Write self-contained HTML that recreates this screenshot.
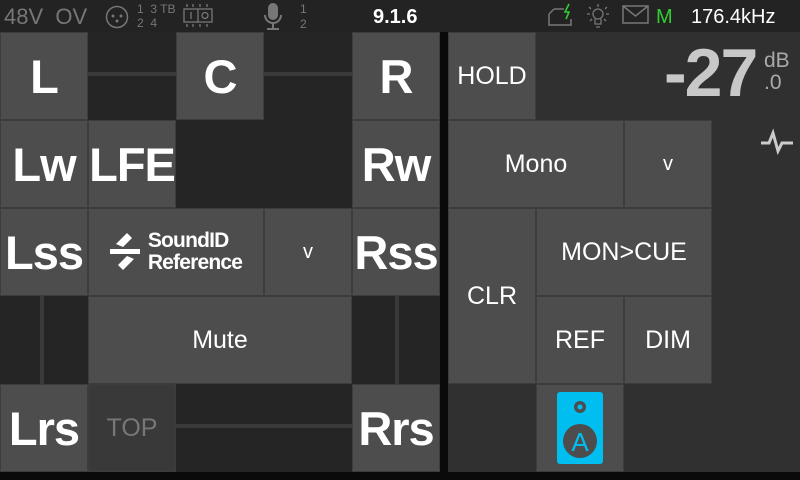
<!DOCTYPE html><html><head><style>
*{margin:0;padding:0;box-sizing:border-box}
body{width:800px;height:480px;background:#0a0a0a;font-family:"Liberation Sans",sans-serif;position:relative;overflow:hidden}
.a{position:absolute}
#top{left:0;top:0;width:800px;height:32px;background:#232323;color:#777}
#lp{left:0;top:32px;width:440px;height:440px;background:#252525}
#rp{left:448px;top:32px;width:352px;height:440px;background:#303030}
.c{position:absolute;background:#4d4d4d;border:1px solid #3c3c3c;color:#fff;display:flex;align-items:center;justify-content:center}
.big{font-weight:bold;font-size:47px;letter-spacing:-1px}
.m{font-size:25px}
.ln{position:absolute;background:#3a3a3a}
</style></head><body>
<div id="top" class="a">
<div class="a" style="left:4px;top:4px;font-size:22px">48V&nbsp; OV</div>
<svg class="a" style="left:105px;top:5px" width="24" height="24"><circle cx="12" cy="12" r="10.5" fill="none" stroke="#777" stroke-width="1.5"/><circle cx="8" cy="11" r="1.5" fill="#777"/><circle cx="16" cy="11" r="1.5" fill="#777"/><circle cx="12" cy="16" r="1.5" fill="#777"/></svg>
<div class="a" style="left:137px;top:2px;font-size:12px;line-height:14px">1 &nbsp;3 TB<br>2 &nbsp;4</div>
<svg class="a" style="left:183px;top:3px" width="30" height="26" stroke="#777" fill="none" stroke-width="1.3"><rect x="1" y="6" width="28" height="13"/><line x1="15" y1="6" x2="15" y2="19"/><line x1="8" y1="9" x2="8" y2="16"/><circle cx="22" cy="12.5" r="3"/><path d="M4 1v3M10 1v3M17 1v3M24 1v3M4 21v3M10 21v3M17 21v3M24 21v3"/></svg>
<svg class="a" style="left:262px;top:3px" width="22" height="28" fill="#777"><rect x="6" y="0" width="10" height="17" rx="5"/><path d="M3 12a8 8 0 0 0 16 0" stroke="#777" stroke-width="2" fill="none"/><rect x="10" y="20" width="2" height="5"/><rect x="5" y="25" width="12" height="2"/></svg>
<div class="a" style="left:300px;top:2px;font-size:12px;line-height:15px">1<br>2</div>
<div class="a" style="left:373px;top:6px;font-size:20px;font-weight:bold;color:#fff">9.1.6</div>
<svg class="a" style="left:548px;top:3px" width="26" height="24" fill="none"><path d="M6 6h10M1 11l5-5M1 11v11h22v-6" stroke="#777" stroke-width="1.5"/><path d="M21 1l-4 8h4l-3 7" stroke="#3c3" stroke-width="1.6"/></svg>
<svg class="a" style="left:585px;top:2px" width="26" height="28" stroke="#777" fill="none" stroke-width="1.3"><circle cx="13" cy="12" r="5"/><path d="M10 17v5h6v-5M11 25h4M13 2v3M4 5l2 2M22 5l-2 2M2 12h3M21 12h3M5 19l2-2M21 19l-2-2"/></svg>
<svg class="a" style="left:622px;top:5px" width="28" height="20" stroke="#777" fill="none" stroke-width="1.5"><rect x="1" y="1" width="25" height="17"/><path d="M1 1l12.5 10L26 1"/></svg>
<div class="a" style="left:656px;top:6px;font-size:20px;color:#3c3">M</div>
<div class="a" style="left:691px;top:6px;font-size:20px;color:#fff">176.4kHz</div>
</div>
<div id="lp" class="a">
<div class="ln" style="left:88px;top:40px;width:88px;height:4px"></div>
<div class="ln" style="left:264px;top:40px;width:88px;height:4px"></div>
<div class="ln" style="left:40px;top:264px;width:4px;height:88px"></div>
<div class="ln" style="left:395px;top:264px;width:4px;height:88px"></div>
<div class="ln" style="left:176px;top:392px;width:176px;height:4px"></div>
<div class="c big" style="left:0;top:0;width:88px;height:88px">L</div>
<div class="c big" style="left:176px;top:0;width:88px;height:88px">C</div>
<div class="c big" style="left:352px;top:0;width:88px;height:88px">R</div>
<div class="c big" style="left:0;top:88px;width:88px;height:88px">Lw</div>
<div class="c big" style="left:88px;top:88px;width:88px;height:88px">LFE</div>
<div class="c big" style="left:352px;top:88px;width:88px;height:88px">Rw</div>
<div class="c big" style="left:0;top:176px;width:88px;height:88px">Lss</div>
<div class="c" style="left:88px;top:176px;width:176px;height:88px"><svg width="30" height="44" fill="#fff" style="margin-right:8px"><path d="M6 14l11-11 5 5-9 9z"/><rect x="0" y="19" width="30" height="5"/><path d="M24 29l-11 11-5-5 9-9z"/></svg><div style="font-size:21px;line-height:22px;letter-spacing:-0.8px;font-weight:bold;-webkit-text-stroke:0">SoundID<br>Reference</div></div>
<div class="c" style="left:264px;top:176px;width:88px;height:88px;font-size:20px">v</div>
<div class="c big" style="left:352px;top:176px;width:88px;height:88px">Rss</div>
<div class="c m" style="left:88px;top:264px;width:264px;height:88px">Mute</div>
<div class="c big" style="left:0;top:352px;width:88px;height:88px">Lrs</div>
<div class="c m" style="left:88px;top:352px;width:88px;height:88px;background:#393939;color:#777">TOP</div>
<div class="c big" style="left:352px;top:352px;width:88px;height:88px">Rrs</div>
</div>
<div id="rp" class="a">
<div class="c m" style="left:0;top:0;width:88px;height:88px">HOLD</div>
<div class="a" style="left:216px;top:2px;font-size:68px;font-weight:bold;color:#c8c8c8;letter-spacing:-2px">-27</div>
<div class="a" style="left:316px;top:18px;font-size:21px;color:#aaa;line-height:22px">dB<br>.0</div>
<svg class="a" style="left:312px;top:96px" width="34" height="30" stroke="#ccc" stroke-width="3" fill="none"><path d="M1 15h8l4-10 5 18 4-8h11"/></svg>
<div class="c m" style="left:0;top:88px;width:176px;height:88px">Mono</div>
<div class="c" style="left:176px;top:88px;width:88px;height:88px;font-size:20px">v</div>
<div class="c m" style="left:0;top:176px;width:88px;height:176px">CLR</div>
<div class="c m" style="left:88px;top:176px;width:176px;height:88px">MON&gt;CUE</div>
<div class="c m" style="left:88px;top:264px;width:88px;height:88px">REF</div>
<div class="c m" style="left:176px;top:264px;width:88px;height:88px">DIM</div>
<div class="c" style="left:88px;top:352px;width:88px;height:88px"><svg width="48" height="74"><rect x="1" y="1" width="46" height="72" rx="3" fill="#00bff0"/><circle cx="24" cy="16" r="6" fill="#4d4d4d"/><circle cx="24" cy="16" r="2.5" fill="#00bff0"/><circle cx="24" cy="50" r="17" fill="#4d4d4d"/><text x="24" y="60" text-anchor="middle" font-family="Liberation Sans" font-size="26" fill="#00bff0">A</text></svg></div>
</div>
</body></html>
